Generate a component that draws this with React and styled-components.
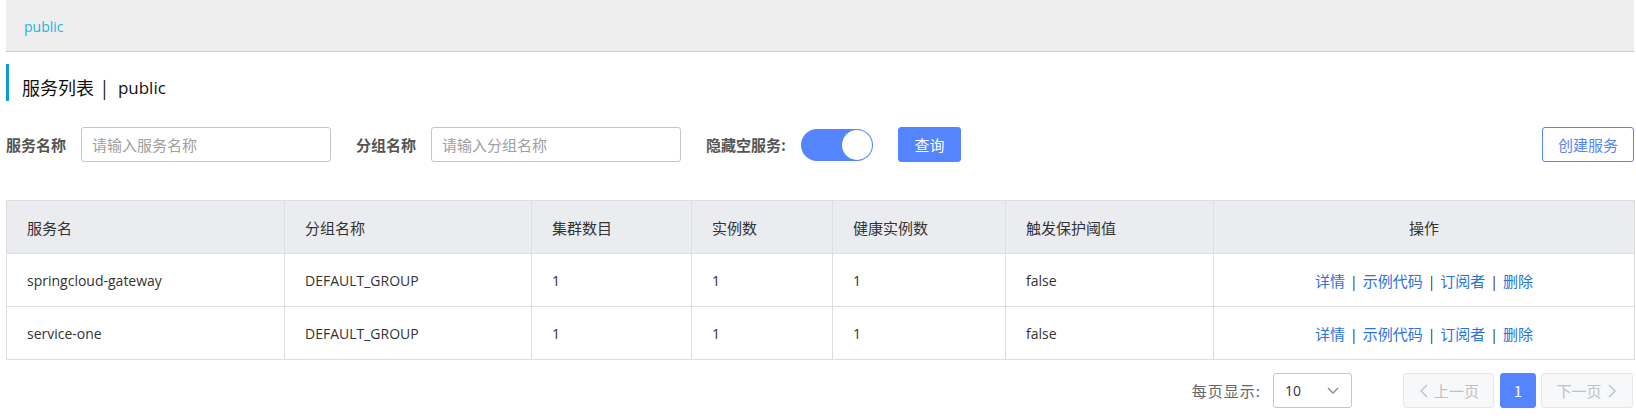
import React from "react";
import styled, { createGlobalStyle } from "styled-components";

const GlobalStyle = createGlobalStyle`
  html, body { margin: 0; padding: 0; background: #fff; }
  body {
    font-family: "Open Sans", "Noto Sans CJK SC", sans-serif;
    color: #333;
    font-size: 14px;
  }
  * { box-sizing: border-box; }
`;

const Page = styled.div`
  padding: 0 2px 0 6px;
`;

const Breadcrumb = styled.div`
  height: 52px;
  background: #eeeeee;
  border-bottom: 1px solid #cccccc;
  display: flex;
  align-items: center;
  padding: 2px 0 0 18px;
  color: #1cb6dd;
  font-size: 14px;
`;

const Title = styled.div`
  margin-top: 12px;
  height: 37px;
  border-left: 3px solid #0b9ad3;
  padding: 9px 0 0 13px;
  display: flex;
  align-items: center;
  font-size: 18px;
  color: #111;
  font-family: "Noto Sans CJK SC", sans-serif;
`;

const TitleLatin = styled.span`
  font-family: "Open Sans", sans-serif;
  font-size: 17px;
`;

const Sep = styled.span`
  margin: 0 11px 0 8px;
`;

const FilterRow = styled.div`
  margin-top: 26px;
  display: flex;
  align-items: center;
  height: 35px;
`;

const Label = styled.span`
  font-weight: bold;
  color: #555;
  font-size: 15px;
  margin-left: ${(p) => p.$gap || 0}px;
  margin-right: 15px;
  font-family: "Noto Sans CJK SC", sans-serif;
`;

const Input = styled.input`
  width: 250px;
  height: 35px;
  border: 1px solid #c4c6cf;
  border-radius: 3px;
  padding: 0 10px;
  font-size: 15px;
  font-family: "Noto Sans CJK SC", sans-serif;
  outline: none;
  &::placeholder { color: #a0a0a0; }
`;

const Switch = styled.div`
  width: 72px;
  height: 32px;
  border-radius: 16px;
  background: #5584ff;
  display: flex;
  align-items: center;
  justify-content: flex-end;
  padding: 1px;
`;

const Knob = styled.div`
  width: 30px;
  height: 30px;
  border-radius: 50%;
  background: #fff;
`;

const Button = styled.button`
  height: 35px;
  padding: 0;
  width: ${(p) => p.$w}px;
  border-radius: 3px;
  font-size: 15px;
  font-family: "Noto Sans CJK SC", sans-serif;
  cursor: pointer;
  margin-left: ${(p) => (p.$auto ? "auto" : `${p.$gap || 0}px`)};
  border: 1px solid #5584ff;
  background: ${(p) => (p.$primary ? "#5584ff" : "#fff")};
  color: ${(p) => (p.$primary ? "#fff" : "#5584ff")};
`;

const Table = styled.table`
  margin-top: 38px;
  width: 100%;
  border-collapse: collapse;
  border: 1px solid #dcdee3;
  table-layout: fixed;
`;

const Th = styled.th`
  height: 53px;
  background: #ebecf0;
  border: 1px solid #dcdee3;
  font-weight: normal;
  text-align: ${(p) => (p.$center ? "center" : "left")};
  padding: 0 20px;
  font-size: 15px;
  color: #333;
  font-family: "Noto Sans CJK SC", sans-serif;
`;

const Td = styled.td`
  height: 53px;
  border: 1px solid #dcdee3;
  text-align: ${(p) => (p.$center ? "center" : "left")};
  padding: 0 20px;
  font-size: 14px;
  color: #333;
`;

const Link = styled.a`
  color: #2b73dc;
  text-decoration: none;
  font-size: 15px;
  font-family: "Noto Sans CJK SC", sans-serif;
  cursor: pointer;
`;

const Pipe = styled.span`
  color: #333;
  margin: 0 5px;
`;

const Pager = styled.div`
  margin-top: 13px;
  display: flex;
  justify-content: flex-end;
  align-items: center;
  padding-right: 1px;
`;

const PagerLabel = styled.span`
  color: #666;
  font-size: 15px;
  letter-spacing: 1px;
  margin-right: 12px;
  font-family: "Noto Sans CJK SC", sans-serif;
`;

const Select = styled.div`
  width: 79px;
  height: 35px;
  border: 1px solid #c4c6cf;
  border-radius: 3px;
  display: flex;
  align-items: center;
  justify-content: space-between;
  padding: 0 12px 0 11px;
  margin-right: 51px;
  font-size: 14px;
  color: #333;
`;

const PageBtn = styled.button`
  height: 35px;
  width: ${(p) => p.$w}px;
  margin-left: ${(p) => p.$gap || 0}px;
  border-radius: 3px;
  border: 1px solid ${(p) => (p.$active ? "#5584ff" : "#e6e7eb")};
  background: ${(p) => (p.$active ? "#5584ff" : "#f7f8fa")};
  color: ${(p) => (p.$active ? "#fff" : "#c1c1c1")};
  font-size: 15px;
  font-family: "Noto Sans CJK SC", sans-serif;
  display: flex;
  align-items: center;
  justify-content: center;
  gap: 4px;
  padding: 0;
`;

const Chevron = ({ dir }) => (
  <svg width="12" height="16" viewBox="0 0 12 16" fill="none">
    {dir === "left" && <path d="M9 2 L3 8 L9 14" stroke="#c1c1c1" strokeWidth="1.4" />}
    {dir === "right" && <path d="M3 2 L9 8 L3 14" stroke="#c1c1c1" strokeWidth="1.4" />}
    {dir === "down" && <path d="M1 5 L6 10 L11 5" stroke="#888" strokeWidth="1.3" />}
  </svg>
);

const rows = [
  { name: "springcloud-gateway", group: "DEFAULT_GROUP", cluster: 1, inst: 1, healthy: 1, prot: "false" },
  { name: "service-one", group: "DEFAULT_GROUP", cluster: 1, inst: 1, healthy: 1, prot: "false" },
];

const cols = [278, 247, 160, 141, 173, 208, 421];

export default function App() {
  return (
    <>
      <GlobalStyle />
      <Page>
        <Breadcrumb>public</Breadcrumb>
        <Title>
          服务列表<Sep>|</Sep>
          <TitleLatin>public</TitleLatin>
        </Title>
        <FilterRow>
          <Label>服务名称</Label>
          <Input placeholder="请输入服务名称" />
          <Label $gap={25}>分组名称</Label>
          <Input placeholder="请输入分组名称" />
          <Label $gap={25}>隐藏空服务:</Label>
          <Switch>
            <Knob />
          </Switch>
          <Button $primary $gap={25} $w={63}>查询</Button>
          <Button $auto $w={92}>创建服务</Button>
        </FilterRow>
        <Table>
          <colgroup>
            {cols.map((w, i) => (
              <col key={i} style={{ width: w }} />
            ))}
          </colgroup>
          <thead>
            <tr>
              <Th>服务名</Th>
              <Th>分组名称</Th>
              <Th>集群数目</Th>
              <Th>实例数</Th>
              <Th>健康实例数</Th>
              <Th>触发保护阈值</Th>
              <Th $center>操作</Th>
            </tr>
          </thead>
          <tbody>
            {rows.map((r) => (
              <tr key={r.name}>
                <Td>{r.name}</Td>
                <Td>{r.group}</Td>
                <Td>{r.cluster}</Td>
                <Td>{r.inst}</Td>
                <Td>{r.healthy}</Td>
                <Td>{r.prot}</Td>
                <Td $center>
                  <Link>详情</Link>
                  <Pipe>|</Pipe>
                  <Link>示例代码</Link>
                  <Pipe>|</Pipe>
                  <Link>订阅者</Link>
                  <Pipe>|</Pipe>
                  <Link>删除</Link>
                </Td>
              </tr>
            ))}
          </tbody>
        </Table>
        <Pager>
          <PagerLabel>每页显示:</PagerLabel>
          <Select>
            <span>10</span>
            <Chevron dir="down" />
          </Select>
          <PageBtn $w={91}>
            <Chevron dir="left" />
            上一页
          </PageBtn>
          <PageBtn $w={36} $gap={6} $active>
            1
          </PageBtn>
          <PageBtn $w={92} $gap={5}>
            下一页
            <Chevron dir="right" />
          </PageBtn>
        </Pager>
      </Page>
    </>
  );
}
